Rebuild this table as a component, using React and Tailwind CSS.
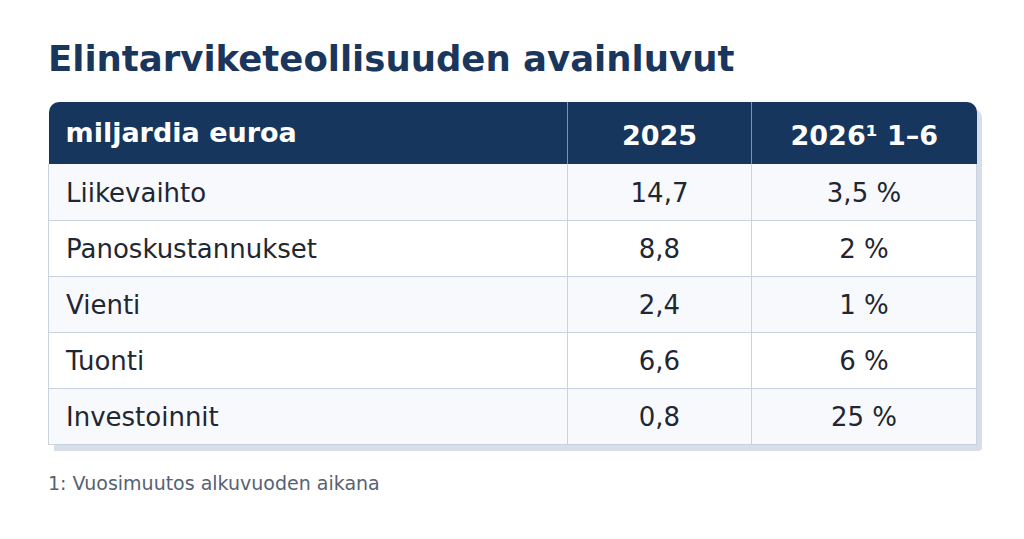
import React from "react";

const rows = [
  { label: "Liikevaihto", y2025: "14,7", y2026: "3,5 %" },
  { label: "Panoskustannukset", y2025: "8,8", y2026: "2 %" },
  { label: "Vienti", y2025: "2,4", y2026: "1 %" },
  { label: "Tuonti", y2025: "6,6", y2026: "6 %" },
  { label: "Investoinnit", y2025: "0,8", y2026: "25 %" },
];

export default function App() {
  return (
    <div className="w-[1024px] h-[539px] bg-white font-['DejaVu_Sans',sans-serif] pl-[48px] pt-[36px]">
      <h1 className="text-[35.5px] leading-[46px] font-bold text-[#1b365d]">
        Elintarviketeollisuuden avainluvut
      </h1>
      <div className="mt-[20px] w-[928px] rounded-t-[10px] rounded-br-[4px] shadow-[6px_6px_0_#d7dee7] bg-white">
        <table className="w-full border-collapse table-fixed">
          <colgroup>
            <col className="w-[519px]" />
            <col className="w-[184px]" />
            <col className="w-[225px]" />
          </colgroup>
          <thead>
            <tr className="h-[62px] bg-[#17365d] text-white text-[27px] font-bold">
              <th className="text-left pl-[17px] rounded-tl-[10px] font-bold">miljardia euroa</th>
              <th className="text-center pt-[6px] border-l border-[#8093aa] font-bold">2025</th>
              <th className="text-center pt-[6px] border-l border-[#8093aa] rounded-tr-[10px] font-bold">
                2026¹ 1–6
              </th>
            </tr>
          </thead>
          <tbody>
            {rows.map((r, i) => (
              <tr
                key={i}
                className={`h-[56px] text-[26px] text-[#1f2733] ${
                  i % 2 === 0 ? "bg-[#f7f9fc]" : "bg-white"
                }`}
              >
                <td className="pl-[17px] pt-[3px] border-b border-l border-[#c9d3df]">{r.label}</td>
                <td className="text-center pt-[3px] border-b border-l border-[#c9d3df]">{r.y2025}</td>
                <td className="text-center pt-[3px] border-b border-l border-r border-[#c9d3df]">{r.y2026}</td>
              </tr>
            ))}
          </tbody>
        </table>
      </div>
      <p className="mt-[24px] text-[19px] text-[#566273]">1: Vuosimuutos alkuvuoden aikana</p>
    </div>
  );
}
